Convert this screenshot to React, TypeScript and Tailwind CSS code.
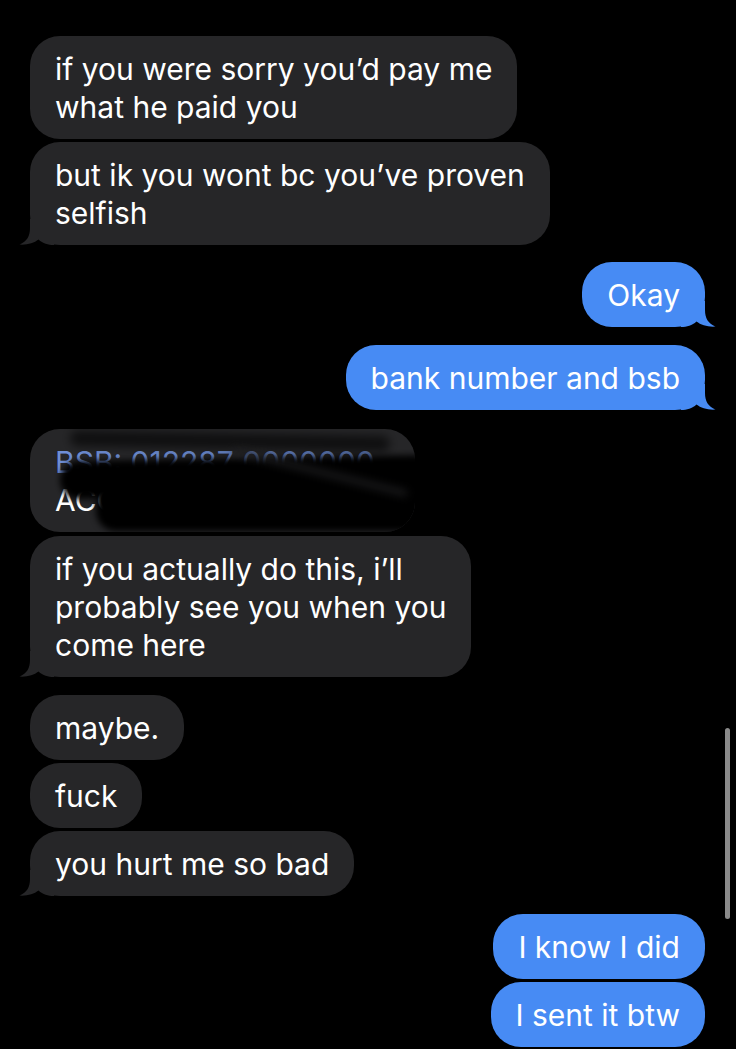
import React from 'react';

type Side = 'them' | 'me';

const FONT = { fontFamily: 'Inter, "Noto Sans", "Liberation Sans", sans-serif' };

// iMessage style tail, drawn for the left side and mirrored for the right.
const Tail: React.FC<{ side: Side }> = ({ side }) => (
  <svg
    width="36"
    height="26"
    viewBox="0 0 36 26"
    className={`absolute bottom-0 ${side === 'them' ? 'left-[-12px]' : 'right-[-12px] -scale-x-100'}`}
  >
    <path
      d="M12 0 L12 9 C12 17 9 22.5 1.5 25.6 C9 26.2 16 24 20.5 20.5 C25 24.5 30 26 36 26 L36 0 Z"
      fill={side === 'them' ? '#262628' : '#478bf4'}
    />
  </svg>
);

const Bubble: React.FC<{ side: Side; tail?: boolean; lines: string[] }> = ({ side, tail, lines }) => (
  <div
    className={`relative rounded-[30px] px-[25px] py-[13.5px] text-[30px] leading-[38px] text-white ${
      side === 'them' ? 'self-start bg-[#262628]' : 'self-end bg-[#478bf4]'
    }`}
  >
    {lines.map((l, i) => (
      <div key={i} className="whitespace-nowrap">
        {l}
      </div>
    ))}
    {tail && <Tail side={side} />}
  </div>
);

// The bank details bubble, scribbled over in the screenshot.
const RedactedBubble: React.FC = () => (
  <div className="relative w-[385px] self-start overflow-hidden rounded-[30px] bg-[#262628] py-[13.5px] pl-[25px] text-[30px] leading-[38px]">
    <div className="whitespace-nowrap text-[#6f8fd6]">BSB: 012287 0000000</div>
    <div className="whitespace-nowrap text-white">ACC: 0000 0000</div>
    <div className="absolute left-[40px] top-[4px] h-[16px] w-[320px] rotate-[1deg] rounded-full bg-black/60 blur-[5px]" />
    <div className="absolute left-[30px] top-[29px] h-[38px] w-[380px] -rotate-[1deg] rounded-[20px] bg-black blur-[3px]" />
    <div className="absolute left-[66px] top-[56px] h-[46px] w-[340px] rounded-[20px] bg-black blur-[3px]" />
    <div className="absolute left-[200px] top-[40px] h-[6px] w-[180px] rotate-[14deg] rounded-full bg-[#1c1c1e] blur-[4px]" />
  </div>
);

export default function App() {
  return (
    <div className="relative h-[1049px] w-[736px] overflow-hidden bg-black" style={FONT}>
      <div className="flex flex-col pl-[30px] pr-[31px] pt-[36px]">
        <div className="flex flex-col gap-[3px]">
          <Bubble side="them" lines={['if you were sorry you’d pay me', 'what he paid you']} />
          <Bubble side="them" tail lines={['but ik you wont bc you’ve proven', 'selfish']} />
        </div>

        <div className="mt-[17px] flex flex-col">
          <Bubble side="me" tail lines={['Okay']} />
        </div>

        <div className="mt-[18px] flex flex-col">
          <Bubble side="me" tail lines={['bank number and bsb']} />
        </div>

        <div className="mt-[19px] flex flex-col gap-[4px]">
          <RedactedBubble />
          <Bubble
            side="them"
            tail
            lines={['if you actually do this, i’ll', 'probably see you when you', 'come here']}
          />
        </div>

        <div className="mt-[18px] flex flex-col gap-[3px]">
          <Bubble side="them" lines={['maybe.']} />
          <Bubble side="them" lines={['fuck']} />
          <Bubble side="them" tail lines={['you hurt me so bad']} />
        </div>

        <div className="mt-[18px] flex flex-col items-end gap-[3px]">
          <Bubble side="me" lines={['I know I did']} />
          <Bubble side="me" lines={['I sent it btw']} />
        </div>
      </div>

      {/* scroll indicator */}
      <div className="absolute right-[6px] top-[728px] h-[191px] w-[5px] rounded-full bg-[#8a8a8a]" />
    </div>
  );
}
